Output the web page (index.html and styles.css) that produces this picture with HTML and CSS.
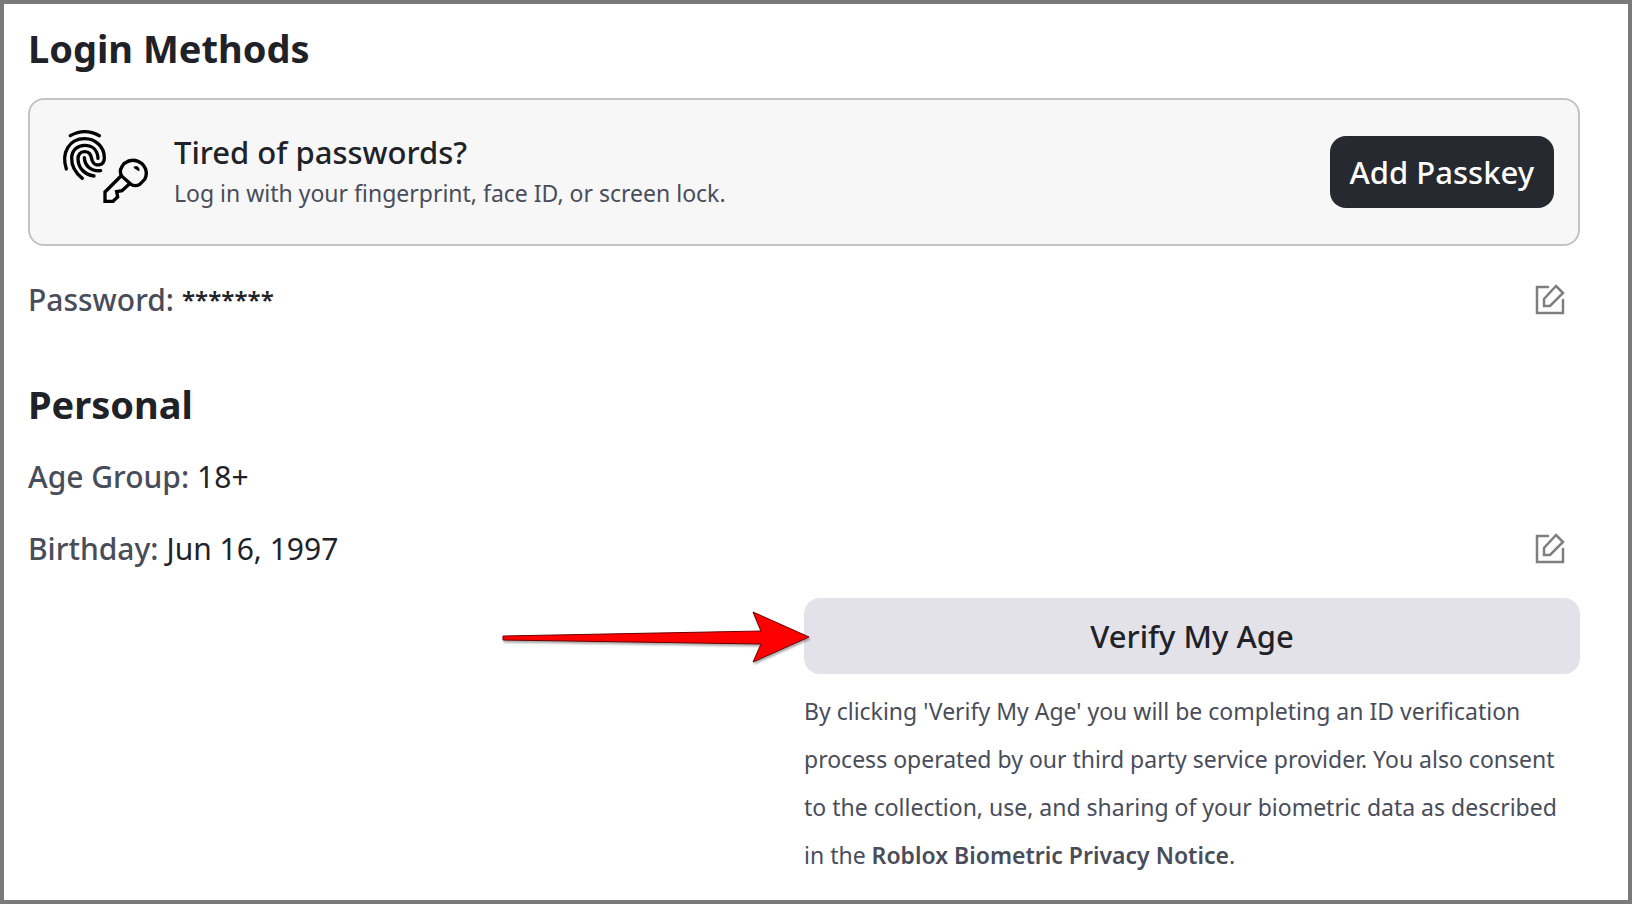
FILE: index.html
```html
<!DOCTYPE html>
<html lang="en">
  <head>
    <meta charset="UTF-8" />
    <meta name="viewport" content="width=device-width, initial-scale=1.0" />
    <title>Account Settings</title>
    <link rel="stylesheet" href="styles.css">
  </head>
  <body>
    <main class="settings">
      <section class="login">
        <h2 class="section-title">Login Methods</h2>

        <div class="passkey-card">
          <svg class="passkey-icon" viewBox="30 39 270 231" fill="none" stroke="#000" stroke-width="10" stroke-linecap="round" aria-hidden="true">
            <!-- fingerprint -->
            <path d="M61 62Q104 38 148 62" />
            <path d="M49 162C33 112 58 71 104 71C138 71 163 97 163 128C163 154 134 156 127 138C122 122 122 110 104 110C90 110 84 120 84 132C85 160 104 179 132 183" />
            <path d="M97 190C74 172 64 150 65 128C66 104 84 91 104 91C128 91 143 106 144 130" />
            <path d="M103 128C104 152 122 169 152 167" />
            <!-- key -->
            <path d="M217 153L223 145Q250 126 276 146Q297 169 284 193L269 208Q256 216 243 208L217 185Q205 172 217 153Z" />
            <path d="M213 183L165 231V259H189L203 246L200 230L216 227L238 207" stroke-linecap="butt" />
            <path d="M254 157Q264 154 266 165Z" fill="#000" stroke-width="6" stroke-linejoin="round" />
          </svg>
          <div class="passkey-text">
            <h3 class="passkey-title">Tired of passwords?</h3>
            <p class="passkey-desc">Log in with your fingerprint, face ID, or screen lock.</p>
          </div>
          <button class="passkey-btn" type="button">Add Passkey</button>
        </div>

        <div class="row">
          <span class="label">Password: <span class="value masked">*******</span></span>
          <button class="edit-btn" type="button" aria-label="Edit password">
            <svg viewBox="0 0 64 64" aria-hidden="true">
              <path d="M28 8H6V60H58V34" />
              <path d="M44 6L58 20L32 46H20V32Z" />
            </svg>
          </button>
        </div>
      </section>

      <section class="personal">
        <h2 class="section-title">Personal</h2>

        <div class="row">
          <span class="label">Age Group: <span class="value">18+</span></span>
        </div>
        <div class="row">
          <span class="label">Birthday: <span class="value">Jun 16, 1997</span></span>
          <button class="edit-btn" type="button" aria-label="Edit birthday">
            <svg viewBox="0 0 64 64" aria-hidden="true">
              <path d="M28 8H6V60H58V34" />
              <path d="M44 6L58 20L32 46H20V32Z" />
            </svg>
          </button>
        </div>

        <div class="verify">
          <button class="verify-btn" type="button">Verify My Age</button>
          <p class="verify-note">By clicking 'Verify My Age' you will be completing an ID verification process operated by our third party service provider. You also consent to the collection, use, and sharing of your biometric data as described in the <a class="notice-link" href="#">Roblox Biometric Privacy Notice</a>.</p>
          <svg class="arrow" viewBox="0 0 310 56" aria-hidden="true">
            <path d="M1 26L259 21L251 2L307 27L251 52L259 34L1 30Z" />
          </svg>
        </div>
      </section>
    </main>
  </body>
</html>
```
FILE: styles.css
```css
* {
  box-sizing: border-box;
}

body {
  margin: 0;
  min-height: 100vh;
  border: 4px solid #7a7a7a;
  background: #fff;
  color: #202227;
  font-family: "Noto Sans", sans-serif;
  font-size: 30px;
}

h2,
h3,
p {
  margin: 0;
}

button {
  border: none;
  font-family: inherit;
  font-size: inherit;
  color: inherit;
  cursor: pointer;
}

.settings {
  padding: 20px 48px 0 24px;
}

.section-title {
  font-size: 38px;
  line-height: 48px;
  font-weight: 700;
}

/* Passkey banner */
.passkey-card {
  display: flex;
  align-items: center;
  height: 148px;
  margin: 26px 0 17px;
  padding: 0 24px 0 30px;
  background: #f7f7f8;
  border: 2px solid #c3c3c4;
  border-radius: 16px;
}

.passkey-icon {
  width: 90px;
  height: 77px;
  flex-shrink: 0;
  margin-right: 24px;
  margin-bottom: 12px;
}

.passkey-text {
  flex: 1;
}

.passkey-title {
  font-size: 31px;
  line-height: 42px;
  font-weight: 500;
}

.passkey-desc {
  font-size: 23px;
  line-height: 40px;
  color: #494d5a;
}

.passkey-btn {
  padding: 0 20px;
  height: 72px;
  border-radius: 16px;
  background: #272930;
  color: #fff;
  font-size: 31px;
  font-weight: 500;
}

/* Setting rows */
.row {
  display: flex;
  align-items: center;
  justify-content: space-between;
  height: 72px;
  padding-right: 14px;
}

.label {
  display: flex;
  align-items: center;
  gap: 8px;
  color: #494d5a;
  font-weight: 500;
}

.value {
  color: #202227;
  font-weight: 400;
}

.masked {
  font-size: 24px;
  font-weight: 600;
}

.edit-btn {
  display: flex;
  padding: 0;
  background: none;
}

.edit-btn svg {
  width: 32px;
  height: 32px;
  fill: none;
  stroke: #7f7f7f;
  stroke-width: 5;
  stroke-linecap: round;
}

.personal {
  margin-top: 45px;
}

.personal .section-title {
  margin-bottom: 12px;
}

/* Age verification */
.verify {
  position: relative;
  width: 50%;
  margin-left: auto;
  margin-top: 14px;
}

.verify-btn {
  width: 100%;
  height: 76px;
  border-radius: 16px;
  background: #e3e2e9;
  font-size: 31px;
  font-weight: 500;
}

.verify-note {
  margin-top: 13px;
  font-size: 23px;
  line-height: 48px;
  color: #494d5a;
}

.notice-link {
  color: inherit;
  font-weight: 600;
  text-decoration: none;
}

.arrow {
  position: absolute;
  top: 12px;
  left: -302px;
  width: 310px;
  height: 56px;
  fill: #f00;
  stroke: #6b0000;
  stroke-width: 1;
  filter: drop-shadow(1px 2px 1px rgba(0, 0, 0, 0.35));
}
```
